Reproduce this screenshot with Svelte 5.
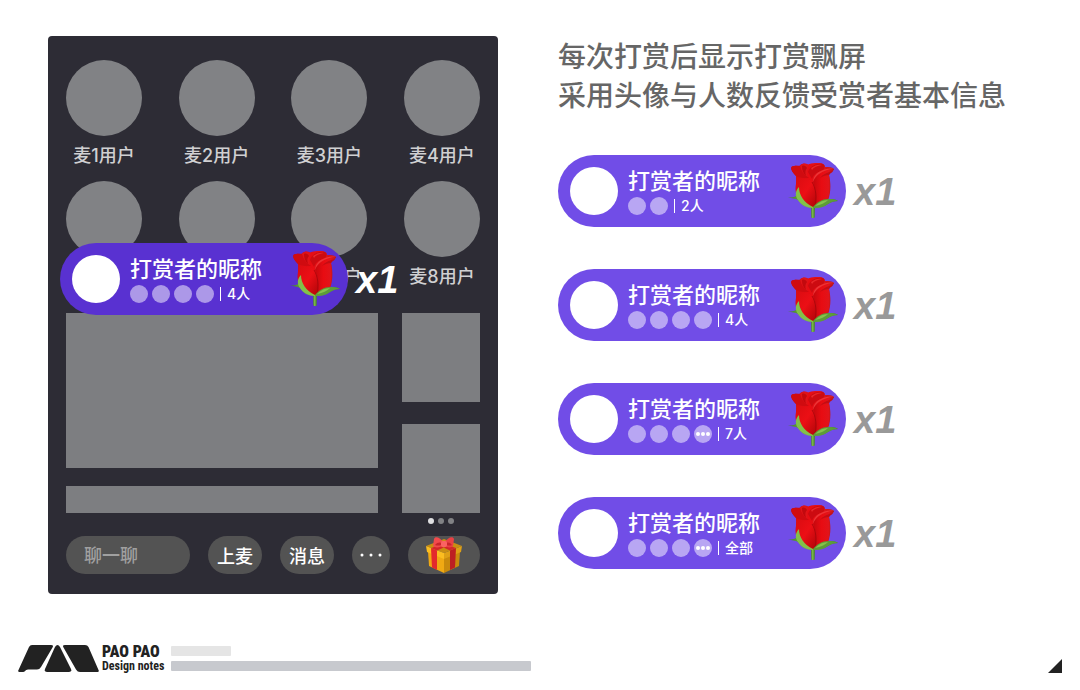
<script lang="ts">
	type Gift = {
		receivers: number;
		more: boolean;
		label: string;
	};

	const seats = [1, 2, 3, 4, 5, 6, 7, 8];

	const liveGift: Gift = { receivers: 4, more: false, label: "4人" };

	const gifts: Gift[] = [
		{ receivers: 2, more: false, label: "2人" },
		{ receivers: 4, more: false, label: "4人" },
		{ receivers: 4, more: true, label: "7人" },
		{ receivers: 4, more: true, label: "全部" },
	];

	let message = $state("");
</script>

{#snippet rose()}
	<svg class="rose" viewBox="0 0 50 56" aria-hidden="true">
		<defs>
			<linearGradient id="rose-body" x1="0" x2="1">
				<stop offset="0" stop-color="#c4080d" />
				<stop offset="0.4" stop-color="#e80c12" />
				<stop offset="0.75" stop-color="#e2141a" />
				<stop offset="1" stop-color="#b5171d" />
			</linearGradient>
			<linearGradient id="rose-front" x1="0" y1="0" x2="1" y2="1">
				<stop offset="0" stop-color="#d90c11" />
				<stop offset="0.5" stop-color="#ec0f15" />
				<stop offset="1" stop-color="#b00509" />
			</linearGradient>
			<linearGradient id="rose-leaf" x1="0" x2="1">
				<stop offset="0" stop-color="#3f7d2c" />
				<stop offset="0.4" stop-color="#7cba45" />
				<stop offset="1" stop-color="#3d7a2b" />
			</linearGradient>
		</defs>
		<path d="M23 42h4l-.3 12.500q-1.700 1.200-3.400 0z" fill="url(#rose-leaf)" />
		<path
			d="M0 34c4 1 6 0 8-1 0-4 1-7 3-9l14 14 15-2c4 0 7 0 10 2-4 0-7 1-10 3-4 3-9 4-15 4-7 0-12-3-15-8-3-2-6-1-10-3z"
			fill="url(#rose-leaf)"
		/>
		<path
			d="M8 13C4 9 2 5 4 3.500 7 2 10 3 12 2.500 14 0 18 0 20 1.500 24 0 32-1 35 1q2 1 2 3c4 0 7 0 9 2-1 3-4 3-5 6 2 8 2 18-1 25-2 5-7 7-14 7C17 44 10 37 8 30 7 23 9 18 8 13z"
			fill="url(#rose-body)"
		/>
		<path d="M20 9c2-6 8-9 15-8 2 1 2 4 0 6-4 2-9 3-11 9z" fill="#cc0b11" />
		<path d="M23 5c4-3 8-4 11-3-5 1-8 2-10 5z" fill="#e8282b" />
		<path d="M12 2.500C15 0 19 0 21 3c-2 3-2 7-1 12-5-2-8-7-8-12.500z" fill="#e01418" />
		<path d="M14 3c2-1 4 0 5 2-2 2-2 5-1 8-3-3-4-6-4-10z" fill="#c2090e" />
		<path d="M4 3.500C7 2 10 3 12 3c1 5 4 9 9 12-5 0-9 1-13-2C4 9 2 5 4 3.500z" fill="#d00b10" />
		<path
			d="M46 6c-5-1-9 0-13 2-5 2-8 6-8 11 3 7 4 15 2 25 7 0 12-3 13-8 2-7 2-16 1-24 1-3 4-3 5-6z"
			fill="url(#rose-body)"
		/>
		<path d="M46 6c-6 0-11 2-15 5-3 2-5 5-6 8 0-5 3-9 8-11 4-2 8-3 13-2z" fill="#ec3335" />
		<path d="M45 8c-5 1-10 3-13 7 3-2 6-3 9-3 1-2 3-2 4-4z" fill="#c30d13" />
		<path
			d="M8 13c5 3 11 1 15 5 6 6 6 17 4 26-9 0-16-6-19-14-1-6 1-12 0-17z"
			fill="url(#rose-front)"
		/>
		<path d="M24 19c4 6 5 16 3 25" fill="none" stroke="#980408" stroke-width="1" opacity=".7" />
		<path d="M11 24c-4 4-4 9-1 13 3 5 8 7 15 8v-1c-9-4-14-12-14-20z" fill="#83c04a" />
		<path d="M50 38c-4-2-7-2-10-2-6 0-11 3-15 8v1c6 0 11-1 15-4 3-2 6-3 10-3z" fill="#5d9c38" />
		<path d="M27 43c4-4 8-6 13-6-3 3-7 5-13 6z" fill="#86c24c" />
	</svg>
{/snippet}

{#snippet banner(gift: Gift)}
	<div class="banner">
		<div class="banner-avatar"></div>
		<div class="banner-info">
			<div class="banner-name">打赏者的昵称</div>
			<div class="banner-receivers">
				{#each { length: gift.receivers } as _, i}
					<span class="receiver">
						{#if gift.more && i === gift.receivers - 1}
							<i></i><i></i><i></i>
						{/if}
					</span>
				{/each}
				<span class="divider"></span>
				<span class="count">{gift.label}</span>
			</div>
		</div>
		{@render rose()}
	</div>
	<span class="combo">x1</span>
{/snippet}

<main class="page">
	<section class="room">
		<div class="seats">
			{#each seats as seat}
				<div class="seat">
					<div class="seat-avatar"></div>
					<div class="seat-name">麦{seat}用户</div>
				</div>
			{/each}
		</div>

		<div class="panels">
			<div class="column">
				<div class="panel chat"></div>
				<div class="panel notice"></div>
			</div>
			<div class="column cards">
				<div class="panel"></div>
				<div class="panel"></div>
			</div>
		</div>

		<div class="pager"><i class="active"></i><i></i><i></i></div>

		<div class="toolbar">
			<input type="text" placeholder="聊一聊" aria-label="聊一聊" bind:value={message} />
			<button type="button">上麦</button>
			<button type="button">消息</button>
			<button type="button" class="round" aria-label="更多">
				<svg width="24" height="4" viewBox="0 0 24 4" fill="#fff">
					<circle cx="3" cy="2" r="1.500" />
					<circle cx="12" cy="2" r="1.500" />
					<circle cx="21" cy="2" r="1.500" />
				</svg>
			</button>
			<button type="button" class="gift" aria-label="礼物">
				<svg width="36" height="36" viewBox="0 0 36 36">
					<path d="M2 14l16 6v16L3 29z" fill="#f0a913" />
					<path d="M34 14l-16 6v16l15-7z" fill="#c98a0c" />
					<path d="M0 9L18 2l18 7-18 7z" fill="#c98e12" />
					<path d="M0 9l18 7v6L1 15z" fill="#fbbd20" />
					<path d="M36 9l-18 7v6l17-7z" fill="#dea016" />
					<path d="M5 11l6 2.500V33l-5-2.500z" fill="#e32a2c" />
					<path d="M30 11l-6 2.500V33l5-2.500z" fill="#bd1f22" />
					<path d="M5 11l17-6 4 2-15 6.500zM30 11L13 5l-3 2 14 6.500z" fill="#d4262a" />
					<path d="M18 6C14 0 9-1 8 2L7 9c2 2 7 2 11-1z" fill="#f24a4c" />
					<path d="M18 6c4-6 9-7 10-4l-1 7c-2 2-6 2-9-1z" fill="#ea4144" />
					<path d="M9 8c2-3 5-3 8-2-2 3-5 3-8 2zM26 8c-2-3-4-3-7-2 2 3 4 3 7 2z" fill="#c9252b" />
					<rect x="15" y="4" width="6" height="6" rx="2" fill="#fb6262" />
				</svg>
			</button>
		</div>

		<div class="live">
			{@render banner(liveGift)}
		</div>
	</section>

	<section class="notes">
		<h1>每次打赏后显示打赏飘屏<br />采用头像与人数反馈受赏者基本信息</h1>
		<div class="gift-list">
			{#each gifts as gift}
				<div class="gift-row">
					{@render banner(gift)}
				</div>
			{/each}
		</div>
	</section>
</main>

<footer class="footer">
	<svg class="logo" viewBox="0 0 81 27" fill="#222" aria-hidden="true">
		<path
			d="M14 0h19q3 0 1.500 2.500L23 22q-1.500 2.500-4 2.500H10q-2 0-3 1.500-.500 1-2 1H1.500Q-.500 27 .500 25L11 2q1-2 3-2z"
		/>
		<path d="M37 2q2.500-4 5 0l11 22q1 3-2 3H29q-3 0-2-3z" />
		<path d="M47 0h20q2.500 0 3.500 2L80.500 25q1 2-1 2H62q-2.500 0-4-2.500L45.500 2.500Q44 0 47 0z" />
	</svg>
	<div class="brand">
		<strong>PAO PAO</strong>
		<span>Design notes</span>
	</div>
	<div class="bars">
		<div class="bar short"></div>
		<div class="bar"></div>
	</div>
	<svg class="corner" viewBox="0 0 14 14" aria-hidden="true">
		<path d="M14 0v14H0z" fill="#222" />
	</svg>
</footer>

<style>
	:global(body) {
		background: #fff;
		font-family: Inter, "Noto Sans CJK SC", sans-serif;
	}

	.page {
		display: grid;
		grid-template-columns: minmax(0, 75fr) minmax(0, 79fr);
		align-items: start;
		gap: 60px;
		padding: 36px 48px 0;
	}

	.room {
		position: relative;
		padding: 24px 18px 20px;
		border-radius: 4px;
		background: #2d2c35;
	}

	.seats {
		display: grid;
		grid-template-columns: repeat(4, 76px);
		justify-content: space-between;
		row-gap: 13px;
	}

	.seat-avatar {
		height: 76px;
		border-radius: 50%;
		background: #818285;
	}

	.seat-name {
		margin-top: 8px;
		font-size: 18px;
		font-weight: 500;
		line-height: 24px;
		text-align: center;
		white-space: nowrap;
		color: #d0d0d2;
	}

	.panels {
		display: grid;
		grid-template-columns: 4fr 1fr;
		gap: 24px;
		margin-top: 24px;
	}

	.column {
		display: flex;
		flex-direction: column;
		gap: 18px;
	}

	.cards {
		gap: 22px;
	}

	.panel {
		height: 89px;
		background: #7d7e81;
	}

	.chat {
		height: 155px;
	}

	.notice {
		height: 27px;
	}

	.pager {
		display: flex;
		justify-content: center;
		gap: 4px;
		width: 19%;
		margin: 5px 0 12px auto;
	}

	.pager i {
		width: 6px;
		height: 6px;
		border-radius: 50%;
		background: #818285;
	}

	.pager .active {
		background: #e0e0e2;
	}

	.toolbar {
		display: flex;
		gap: 18px;
	}

	.toolbar input,
	.toolbar button {
		box-sizing: border-box;
		height: 38px;
		border: none;
		border-radius: 19px;
		background: #535353;
		font-family: inherit;
		font-size: 18px;
		font-weight: 500;
	}

	.toolbar input {
		flex: 1;
		min-width: 0;
		padding: 0 18px;
		color: #fff;
	}

	.toolbar input::placeholder {
		color: #a0a0a0;
		opacity: 1;
	}

	.toolbar button {
		display: flex;
		align-items: center;
		justify-content: center;
		width: 54px;
		padding: 0;
		color: #fff;
		white-space: nowrap;
		cursor: pointer;
	}

	.toolbar .round {
		width: 38px;
	}

	.toolbar .gift {
		width: 72px;
	}

	.live,
	.gift-row {
		display: flex;
		align-items: center;
		gap: 8px;
	}

	.live {
		position: absolute;
		top: 207px;
		left: 12px;
	}

	.banner {
		display: flex;
		align-items: center;
		gap: 10px;
		box-sizing: border-box;
		width: 288px;
		height: 72px;
		padding: 0 8px 0 12px;
		border-radius: 36px;
		background: #714de7;
		color: #fff;
	}

	.live .banner {
		background: #5931d1;
	}

	.banner-avatar {
		width: 48px;
		height: 48px;
		border-radius: 50%;
		background: #fff;
	}

	.banner-info {
		flex: 1;
		padding-top: 2px;
	}

	.banner-name {
		font-size: 22px;
		font-weight: 500;
		line-height: 28px;
		white-space: nowrap;
	}

	.banner-receivers {
		display: flex;
		align-items: center;
		gap: 4px;
		height: 22px;
	}

	.receiver {
		display: flex;
		align-items: center;
		justify-content: center;
		gap: 1px;
		width: 18px;
		height: 18px;
		border-radius: 50%;
		background: rgba(255, 255, 255, 0.5);
	}

	.receiver i {
		width: 4px;
		height: 4px;
		border-radius: 50%;
		background: #fff;
	}

	.divider {
		width: 1px;
		height: 14px;
		margin: 0 2px;
		background: #fff;
	}

	.count {
		font-size: 14px;
		font-weight: 500;
		line-height: 18px;
	}

	.rose {
		width: 50px;
		height: 56px;
	}

	.combo {
		padding-top: 2px;
		font-family: "Liberation Sans", sans-serif;
		font-size: 38px;
		font-style: italic;
		font-weight: 700;
		line-height: 44px;
		color: #999;
	}

	.live .combo {
		color: #fff;
	}

	h1 {
		margin: 0;
		padding-top: 2px;
		font-size: 28px;
		font-weight: 500;
		line-height: 39px;
		white-space: nowrap;
		color: #666;
	}

	.gift-list {
		display: flex;
		flex-direction: column;
		gap: 42px;
		margin-top: 39px;
	}

	.footer {
		display: flex;
		align-items: center;
		margin-top: 50px;
		padding: 0 18px;
	}

	.logo {
		width: 81px;
		height: 27px;
	}

	.brand {
		display: flex;
		flex-direction: column;
		width: 69px;
		margin-left: 3px;
		font-family: "Roboto Condensed", Roboto, sans-serif;
		font-weight: 700;
		white-space: nowrap;
		color: #222;
	}

	.brand strong {
		font-size: 16px;
		line-height: 16px;
	}

	.brand span {
		font-size: 12px;
		line-height: 13px;
	}

	.bars {
		display: flex;
		flex: 0 1 360px;
		flex-direction: column;
		gap: 5px;
	}

	.bar {
		height: 10px;
		border-radius: 1px;
		background: #c7c9ce;
	}

	.short {
		width: 60px;
		background: #e5e5e5;
	}

	.corner {
		align-self: flex-end;
		width: 14px;
		height: 14px;
		margin-left: auto;
	}
</style>
